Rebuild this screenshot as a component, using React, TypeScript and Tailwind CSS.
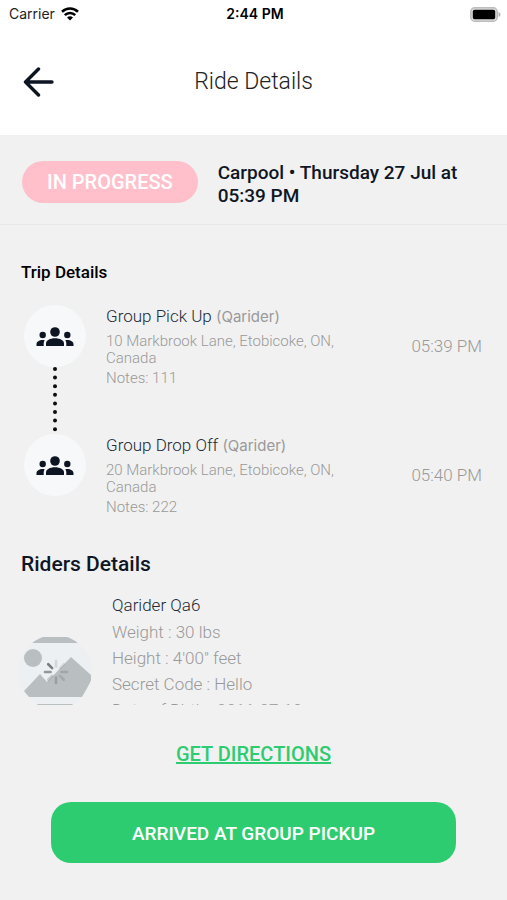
import React from "react";

type Stop = { title: string; place: string; notes: string; time: string };

const stops: Stop[] = [
  { title: "Group Pick Up", place: "10 Markbrook Lane, Etobicoke, ON, Canada", notes: "111", time: "05:39 PM" },
  { title: "Group Drop Off", place: "20 Markbrook Lane, Etobicoke, ON, Canada", notes: "222", time: "05:40 PM" },
];

const riderFacts = ["Weight : 30 lbs", "Height : 4'00\" feet", "Secret Code : Hello", "Date of Birth : 2011-07-10"];

function WifiIcon() {
  return (
    <svg width="18" height="14" viewBox="0 0 18 14" fill="none" stroke="#000" strokeWidth="2.6" aria-hidden="true">
      <path d="M1 4.700a11.500 11.500 0 0 1 16 0" />
      <path d="M3.800 8.200a7.400 7.400 0 0 1 10.400 0" />
      <path d="M9 13.500 6 10.600a4.300 4.300 0 0 1 6 0z" fill="#000" stroke="none" />
    </svg>
  );
}

function BatteryIcon() {
  return (
    <svg width="31" height="15" viewBox="0 0 31 15" aria-hidden="true">
      <rect x="0.8" y="0.8" width="26.4" height="13.4" rx="4" fill="#ddd" stroke="#bdbdbd" strokeWidth="1.6" />
      <rect x="2.800" y="2.800" width="22.400" height="9.400" rx="1.800" fill="#000" />
      <path d="M28.500 5v5c1.300-.5 2-1.400 2-2.500s-.7-2-2-2.500z" fill="#b5b5b5" />
    </svg>
  );
}

function GroupIcon() {
  return (
    <svg width="38" height="20" viewBox="0 0 38 20" fill="#0d1422" aria-hidden="true">
      <circle cx="19" cy="5" r="4.800" />
      <circle cx="6.700" cy="8" r="3.200" />
      <circle cx="31.300" cy="8" r="3.200" />
      <path d="M10 19v-2.600c0-3 4-5.200 9-5.200s9 2.200 9 5.200V19z" />
      <path d="M.5 19v-1.700c0-2.500 2.700-4.200 6.300-4.200.7 0 1.300.1 1.900.2-.7.900-1 1.900-1 3V19z" />
      <path d="M37.500 19v-1.700c0-2.500-2.700-4.200-6.300-4.200-.7 0-1.300.1-1.900.2.7.9 1 1.900 1 3V19z" />
    </svg>
  );
}

function DottedLine() {
  return (
    <svg width="4" height="65" viewBox="0 0 4 65" fill="#0b0d12" aria-hidden="true">
      {[2, 10.6, 19.2, 27.8, 36.4, 45, 53.6, 62.2].map((y) => (
        <circle key={y} cx="2" cy={y} r="2" />
      ))}
    </svg>
  );
}

function RiderPhoto() {
  const spokes = [
    [0, 0.2], [45, 0.15], [90, 0.3], [135, 0.25], [180, 0.4], [225, 0.3], [270, 0.7], [315, 0.9],
  ];
  return (
    <svg width="76" height="76" viewBox="0 0 76 76" role="img" aria-label="Rider photo loading">
      <defs>
        <clipPath id="photo-edge">
          <circle cx="38" cy="38" r="37" />
        </clipPath>
      </defs>
      <g clipPath="url(#photo-edge)">
        <rect y="3" width="76" height="73" fill="#ecf0f3" />
        <rect y="3" width="76" height="6" fill="#b9bec1" />
        <rect y="70" width="76" height="6" fill="#b9bec1" />
        <circle cx="16" cy="24" r="9" fill="#b9bec1" />
        <path d="M7 57 23 40l7 8L54 23l20 18v6L65 63H12z" fill="#b9bec1" />
      </g>
      <g stroke="#6d7174" strokeWidth="2.6" strokeLinecap="round">
        {spokes.map(([angle, opacity]) => (
          <path key={angle} d="M39 32.500v-5.500" opacity={opacity} transform={`rotate(${angle} 39 38)`} />
        ))}
      </g>
    </svg>
  );
}

export default function App() {
  return (
    <div className="flex h-screen min-h-[700px] flex-col bg-[#f1f1f1] font-[Roboto,sans-serif] text-[#0f1624]">
      <header className="bg-white">
        <div className="grid h-7 grid-cols-3 items-center pr-[6px] pl-[9px] font-[Inter,sans-serif] text-black">
          <div className="flex items-center gap-[6px] text-sm text-[#222]">
            <span>Carrier</span>
            <WifiIcon />
          </div>
          <span className="text-center text-sm font-semibold">2:44 PM</span>
          <span className="justify-self-end"><BatteryIcon /></span>
        </div>
        <div className="grid h-[107px] grid-cols-[64px_1fr_64px] items-center">
          <button type="button" aria-label="Go back" className="flex h-12 items-center pl-[23px]">
            <svg width="32" height="30" viewBox="0 0 32 30" fill="none" stroke="#0d1422" strokeWidth="3.4" strokeLinecap="round" strokeLinejoin="round" aria-hidden="true">
              <path d="M29 15H2.500M15.500 2 2.500 15l13 13" />
            </svg>
          </button>
          <h1 className="text-center text-[23px] leading-7 font-light text-[#222]">Ride Details</h1>
        </div>
      </header>

      <section className="flex h-[90px] shrink-0 items-center gap-5 border-b border-[#e8e8e8] px-[22px] pt-1">
        <span className="shrink-0 rounded-full bg-[#ffc0cb] px-[25px] py-[7px] text-xl leading-7 font-medium text-white">IN PROGRESS</span>
        <p className="pt-1 text-[19px] leading-[23px] font-medium">Carpool • Thursday 27 Jul at 05:39 PM</p>
      </section>

      <main className="min-h-0 flex-1 overflow-y-auto px-[21px] pt-9 [scrollbar-width:none]">
        <h2 className="text-[17px] leading-[22px] font-medium text-black">Trip Details</h2>
        <ol className="mt-[22px] h-[245px]">
          {stops.map((stop, index) => (
            <li key={stop.title} className="flex h-[129px] items-start">
              <div className="flex w-[85px] shrink-0 flex-col items-start pl-[3px]">
                <span className="flex h-[62px] w-[62px] items-center justify-center rounded-full bg-[#f7f8f9] pt-[2px]">
                  <GroupIcon />
                </span>
                {index === 0 && <span className="flex w-[62px] justify-center"><DottedLine /></span>}
              </div>
              <div className="min-w-0 flex-1">
                <h3 className="text-[17px] leading-[22px] font-light text-[#222a35]">
                  {stop.title} <span className="font-[Inter,sans-serif] text-[15px] font-normal text-[#999]">(Qarider)</span>
                </h3>
                <p className="mt-[5px] max-w-[240px] text-[15px] leading-[17px] font-light text-[#999]">{stop.place}</p>
                <p className="mt-[3px] text-[15px] leading-[17px] font-light text-[#999]">Notes: {stop.notes}</p>
              </div>
              <time className="mt-[30px] pr-1 text-[17px] leading-[22px] font-light text-[#999]">{stop.time}</time>
            </li>
          ))}
        </ol>
        <h2 className="text-[21px] leading-7 font-medium">Riders Details</h2>
        <div className="mt-[14px] flex gap-[19px]">
          <div className="-ml-1 pt-[42px]"><RiderPhoto /></div>
          <div className="text-[17px] leading-[26px] font-light text-[#999]">
            <h3 className="leading-[27px] text-[#222a35]">Qarider Qa6</h3>
            {riderFacts.map((fact) => <p key={fact}>{fact}</p>)}
          </div>
        </div>
      </main>

      <footer className="flex shrink-0 flex-col items-center gap-[34px] px-[51px] pt-[35px] pb-[37px]">
        <a href="#directions" className="text-xl leading-7 font-medium text-[#2ecc71] underline decoration-2 underline-offset-1">GET DIRECTIONS</a>
        <button type="button" className="h-[61px] w-full rounded-[20px] bg-[#2ecc71] pt-[3px] text-[19px] font-medium text-white">ARRIVED AT GROUP PICKUP</button>
      </footer>
    </div>
  );
}
